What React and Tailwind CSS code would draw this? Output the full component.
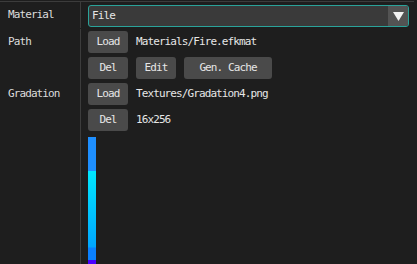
const FONT = { fontFamily: '"DejaVu Sans Mono", "Liberation Mono", monospace' };

function Btn({ children, w }) {
  return (
    <button className={`h-[22px] ${w} rounded-[3px] bg-[#4a4a4a] text-[#e6e6e6] text-[11px] tracking-[-0.9px] flex items-center justify-center shrink-0`}>
      {children}
    </button>
  );
}

function Row({ label, children, top = "pt-[2px]" }) {
  return (
    <div className="flex">
      <div className={`w-[81px] shrink-0 border-r border-[#3c3c3c] pl-2 ${top} pb-[2px] h-[26px] flex items-center text-[#dcdcdc]`}>
        {label}
      </div>
      <div className={`flex-1 pl-[7px] pr-2 ${top} pb-[2px] flex items-center gap-2`}>{children}</div>
    </div>
  );
}

export default function App() {
  return (
    <div className="w-[417px] h-[264px] bg-[#1e1e1e] overflow-hidden text-[11px] tracking-[-0.9px]" style={FONT}>
      <div className="mt-px border-t border-[#3c3c3c] mr-[3px]" />
      <Row label="Material" top="pt-[3px]">
        <div className="flex-1 h-[22px] rounded-[3px] border border-[#2aa39a] bg-[#3a3a3a] flex items-center overflow-hidden">
          <span className="flex-1 pl-[3px] text-[#e6e6e6]">File</span>
          <div className="w-5 h-full bg-[#535353] flex items-center justify-center">
            <svg width="11" height="9" viewBox="0 0 11 9">
              <polygon points="0,0 11,0 5.5,9" fill="#f2f2f2" />
            </svg>
          </div>
        </div>
      </Row>
      <Row label="Path">
        <Btn w="w-10">Load</Btn>
        <span className="text-[#e6e6e6]">Materials/Fire.efkmat</span>
      </Row>
      <Row label="">
        <Btn w="w-10">Del</Btn>
        <Btn w="w-10">Edit</Btn>
        <Btn w="w-[88px]">Gen. Cache</Btn>
      </Row>
      <Row label="Gradation">
        <Btn w="w-10">Load</Btn>
        <span className="text-[#e6e6e6]">Textures/Gradation4.png</span>
      </Row>
      <Row label="">
        <Btn w="w-10">Del</Btn>
        <span className="text-[#e6e6e6]">16x256</span>
      </Row>
      <div className="flex h-[200px]">
        <div className="w-[81px] shrink-0 border-r border-[#3c3c3c]" />
        <div className="pl-[7px] pt-[4px]">
          <div
            className="w-2 h-[128px]"
            style={{
              background:
                "linear-gradient(to bottom, #1e8fff 0px, #1e8fff 34px, #00e8ff 34px, #00a6ff 110px, #0a80ff 111px, #0a80ff 123px, #4a00ff 123px, #4a00ff 128px)",
            }}
          />
        </div>
      </div>
    </div>
  );
}
